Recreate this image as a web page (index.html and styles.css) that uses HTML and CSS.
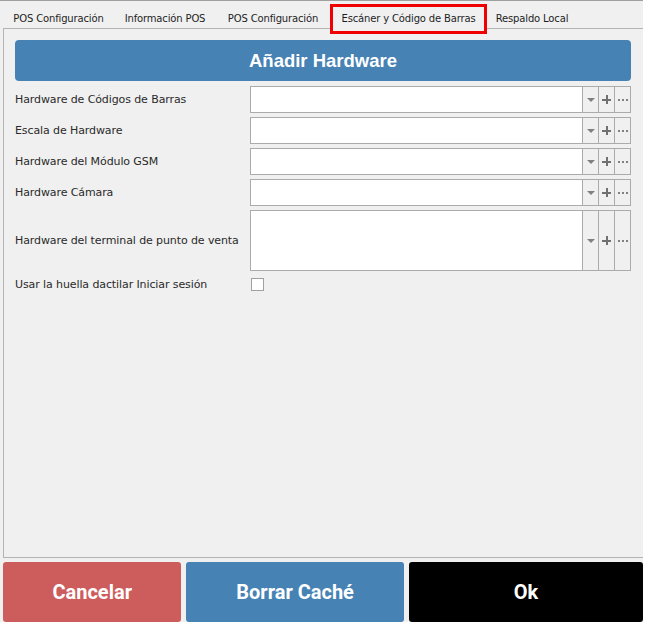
FILE: index.html
```html
<!DOCTYPE html>
<html lang="es">
<head>
<meta charset="utf-8">
<link rel="stylesheet" href="styles.css">
</head>
<body>
<div class="window">
  <div class="tabs">
    <div class="tab t1">POS Configuración</div>
    <div class="tab t2">Información POS</div>
    <div class="tab t3">POS Configuración</div>
    <div class="tab t4 active">Escáner y Código de Barras</div>
    <div class="tab t5">Respaldo Local</div>
  </div>
  <div class="panel">
    <div class="header">Añadir Hardware</div>
    <div class="form">
      <div class="label">Hardware de Códigos de Barras</div>
      <div class="combo"><div class="field"></div><div class="btn"><span class="arrow"></span></div><div class="btn"><span class="plus"></span></div><div class="btn"><span class="dots"></span></div></div>
      <div class="label">Escala de Hardware</div>
      <div class="combo"><div class="field"></div><div class="btn"><span class="arrow"></span></div><div class="btn"><span class="plus"></span></div><div class="btn"><span class="dots"></span></div></div>
      <div class="label">Hardware del Módulo GSM</div>
      <div class="combo"><div class="field"></div><div class="btn"><span class="arrow"></span></div><div class="btn"><span class="plus"></span></div><div class="btn"><span class="dots"></span></div></div>
      <div class="label">Hardware Cámara</div>
      <div class="combo"><div class="field"></div><div class="btn"><span class="arrow"></span></div><div class="btn"><span class="plus"></span></div><div class="btn"><span class="dots"></span></div></div>
      <div class="label">Hardware del terminal de punto de venta</div>
      <div class="combo tall"><div class="field"></div><div class="btn"><span class="arrow"></span></div><div class="btn"><span class="plus"></span></div><div class="btn"><span class="dots"></span></div></div>
      <div class="label check-label">Usar la huella dactilar Iniciar sesión</div>
      <div class="check-cell"><span class="checkbox"></span></div>
    </div>
  </div>
  <div class="actions">
    <div class="action cancel">Cancelar</div>
    <div class="action clear">Borrar Caché</div>
    <div class="action ok">Ok</div>
  </div>
</div>
</body>
</html>
```
FILE: styles.css
```css
html, body {
  margin: 0;
  padding: 0;
  background: #ffffff;
}
.window {
  width: 643px;
  height: 622px;
  background: #f0f0f0;
  border-top: 1px solid #a0a0a0;
  box-sizing: border-box;
  display: flex;
  flex-direction: column;
  font-family: "DejaVu Sans", "Liberation Sans", sans-serif;
  color: #1e1e1e;
}
.tabs {
  display: flex;
  height: 27px;
  padding-left: 3px;
  position: relative;
  z-index: 1;
}
.tab {
  font-size: 10px;
  letter-spacing: -0.15px;
  display: flex;
  align-items: center;
  justify-content: center;
  height: 33px;
  padding-top: 2px;
  box-sizing: border-box;
}
.t1 { width: 111px; }
.t2 { width: 102px; }
.t3 { width: 114px; }
.t4 { width: 157px; }
.t5 { width: 90px; }
.tab.active {
  margin-top: 3px;
  height: 30px;
  border: 3px solid #f00000;
  background: #f0f0f0;
  padding-top: 0;
  padding-bottom: 2px;
}
.panel {
  height: 530px;
  box-sizing: border-box;
  margin-left: 3px;
  border-top: 1px solid #b4b4b4;
  border-left: 1px solid #b4b4b4;
  border-bottom: 1px solid #b4b4b4;
  padding: 11px 12px 0 11px;
}
.header {
  height: 41px;
  background: #4682b4;
  border-radius: 4px;
  color: #ffffff;
  font-family: "Liberation Sans", Arial, sans-serif;
  font-weight: 700;
  font-size: 18.5px;
  display: flex;
  align-items: center;
  justify-content: center;
  margin-bottom: 5px;
}
.form {
  display: grid;
  grid-template-columns: 235px 381px;
  row-gap: 4px;
}
.label {
  font-size: 11px;
  letter-spacing: -0.1px;
  display: flex;
  align-items: center;
  color: #2a2a2a;
}
.combo {
  height: 27px;
  display: flex;
  border: 1px solid #ababab;
  box-sizing: border-box;
}
.combo.tall {
  height: 61px;
}
.field {
  flex: 1;
  background: #ffffff;
}
.btn {
  width: 15px;
  border-left: 1px solid #ababab;
  background: #f0f0f0;
  display: flex;
  align-items: center;
  justify-content: center;
}
.arrow {
  width: 0;
  height: 0;
  border-left: 4px solid transparent;
  border-right: 4px solid transparent;
  border-top: 4px solid #808080;
}
.plus {
  width: 9px;
  height: 9px;
  background:
    linear-gradient(#707070, #707070) center / 9px 2px no-repeat,
    linear-gradient(#707070, #707070) center / 2px 9px no-repeat;
}
.dots {
  width: 10px;
  height: 2px;
  background: radial-gradient(circle, #808080 0.9px, transparent 1.1px) 0 0 / 4px 2px repeat-x;
  background-position: -1px 0;
}
.check-label {
  height: 18px;
}
.check-cell {
  display: flex;
  align-items: center;
  padding-left: 1px;
}
.checkbox {
  width: 13px;
  height: 13px;
  box-sizing: border-box;
  border: 1px solid #a0a0a0;
  background: #ffffff;
}
.actions {
  display: flex;
  gap: 5px;
  padding-left: 3px;
  margin-top: 4px;
  height: 60px;
}
.action {
  border-radius: 3px;
  color: #ffffff;
  font-family: Roboto, "Liberation Sans", sans-serif;
  font-weight: 700;
  font-size: 20px;
  display: flex;
  align-items: center;
  justify-content: center;
}
.cancel { width: 179px; background: #cd5c5c; }
.clear { width: 218px; background: #4682b4; }
.ok { width: 235px; background: #000000; }
```
